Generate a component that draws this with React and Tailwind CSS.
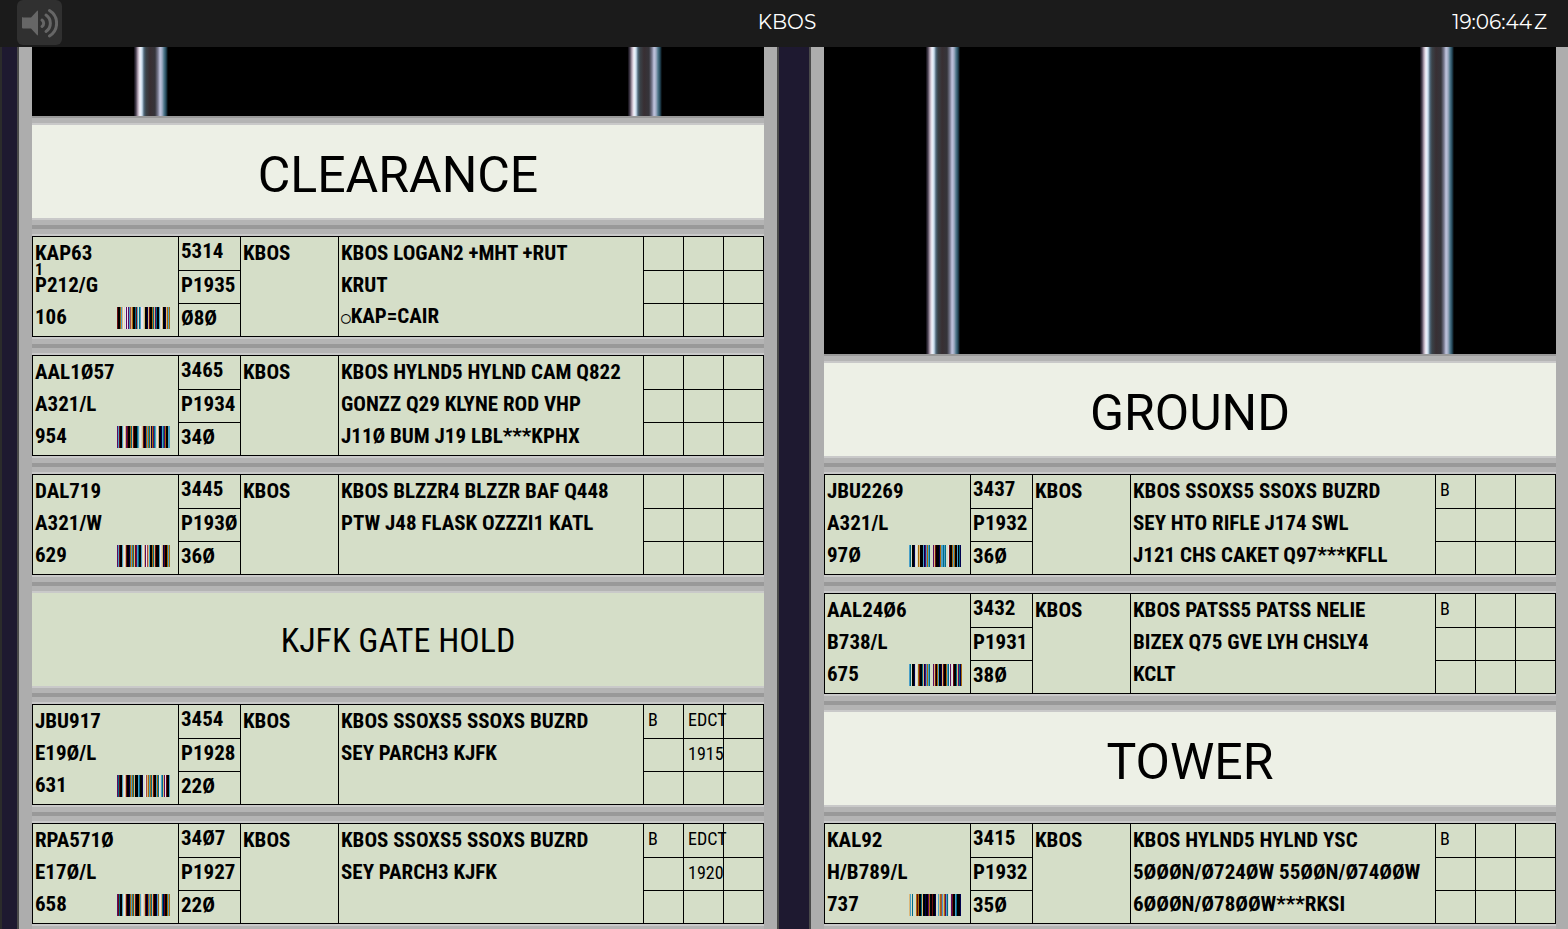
import React, { useState } from 'react';

const BAR_COLORS = {
  K: '#000000',
  n: '#00004f',
  p: '#5b0a63',
  r: '#6b0c10',
  m: '#a04c4c',
  o: '#a8690a',
  l: '#dcb878',
  t: '#006a86',
  b: '#4aa0c8',
  w: '#e8e4ec',
};

const CLEARANCE = [
  {
    id: 'KAP63', rev: '1', type: 'P212/G', cid: '106', code: '5314', time: 'P1935', alt: 'Ø8Ø', bars: 'rKKoblw.wpwpbmloKKtrb.tbww.lKKnlrKKotlptKKb.wlKKnlobo',
    route: ['KBOS LOGAN2 +MHT +RUT', 'KRUT', '○KAP=CAIR'], notes: {},
  },
  {
    id: 'AAL1Ø57', type: 'A321/L', cid: '954', code: '3465', time: 'P1934', alt: '34Ø', bars: 'pbrKKb.wlprKKotlrKKKtb.w.lrKnobotlnoptb.wlKKnbtpoKKbb',
    route: ['KBOS HYLND5 HYLND CAM Q822', 'GONZZ Q29 KLYNE ROD VHP', 'J11Ø BUM J19 LBL***KPHX'], notes: {},
  },
  {
    id: 'DAL719', type: 'A321/W', cid: '629', code: '3445', time: 'P193Ø', alt: '36Ø', bars: 'pbrKKb.wlrKKnobotlrpbtKKb.wlpwmlbKKotlrKKKbw.lnrKKobo',
    route: ['KBOS BLZZR4 BLZZR BAF Q448', 'PTW J48 FLASK OZZZI1 KATL'], notes: {},
  },
];

const GATE_HOLD = [
  {
    id: 'JBU917', type: 'E19Ø/L', cid: '631', code: '3454', time: 'P1928', alt: '22Ø', bars: 'ptrKKb.wlrKKnobotlKKKbtKKn..wmlobotlrKKbotw.btlpwrKKb',
    route: ['KBOS SSOXS5 SSOXS BUZRD', 'SEY PARCH3 KJFK'], notes: { 0: 'B', 1: 'EDCT', 4: '1915' },
  },
  {
    id: 'RPA571Ø', type: 'E17Ø/L', cid: '658', code: '34Ø7', time: 'P1927', alt: '22Ø', bars: 'prtKKb.wlrKKnobotlrKKKob.w.lrKnobotlrKKnbo.wltnrKKobo',
    route: ['KBOS SSOXS5 SSOXS BUZRD', 'SEY PARCH3 KJFK'], notes: { 0: 'B', 1: 'EDCT', 4: '1920' },
  },
];

const GROUND = [
  {
    id: 'JBU2269', type: 'A321/L', cid: '97Ø', code: '3437', time: 'P1932', alt: '36Ø', bars: 'bt.KKn.w.olKKKbnpbobt...plrKKKnobbtbt..wrKKoboKKbKtn.',
    route: ['KBOS SSOXS5 SSOXS BUZRD', 'SEY HTO RIFLE J174 SWL', 'J121 CHS CAKET Q97***KFLL'], notes: { 0: 'B' },
  },
  {
    id: 'AAL24Ø6', type: 'B738/L', cid: '675', code: '3432', time: 'P1931', alt: '38Ø', bars: 'bt.KKn.w.orKKtlnpbobt...plrKobKKnlrKKobtwp.wrKKtlptno',
    route: ['KBOS PATSS5 PATSS NELIE', 'BIZEX Q75 GVE LYH CHSLY4', 'KCLT'], notes: { 0: 'B' },
  },
];

const TOWER = [
  {
    id: 'KAL92', type: 'H/B789/L', cid: '737', code: '3415', time: 'P1932', alt: '35Ø', bars: 'lb.t...oroKKtlKKnKKpoKKrKKn..blomblopbt.w.prKKbtKKKn.',
    route: ['KBOS HYLND5 HYLND YSC', '5ØØØN/Ø724ØW 55ØØN/Ø74ØØW', '6ØØØN/Ø78ØØW***RKSI'], notes: { 0: 'B' },
  },
];

function Barcode({ pattern }) {
  return (
    <svg className="h-[22px] w-[53px] shrink-0" viewBox="0 0 53 22" shapeRendering="crispEdges" aria-hidden="true">
      {pattern.split('').map((c, i) =>
        BAR_COLORS[c] ? <rect key={i} x={i} y="0" width="1" height="22" fill={BAR_COLORS[c]} /> : null
      )}
    </svg>
  );
}

function Slot({ children }) {
  return (
    <div className="shrink-0 border-y-2 border-[#999999]">
      <div className="border-y-[5px] border-[#b4b4b4]">
        <div className="border-y-2 border-[#c9c9c9]">{children}</div>
      </div>
    </div>
  );
}

function Separator({ label }) {
  return (
    <Slot>
      <h2 className="flex h-[93px] items-center justify-center bg-[#edf0e6] pt-1.5 font-[Roboto,sans-serif] text-[50px] leading-none">
        {label}
      </h2>
    </Slot>
  );
}

function HandwrittenSeparator({ value }) {
  const [text, setText] = useState(value);
  return (
    <Slot>
      <input
        aria-label="Separator text"
        value={text}
        onChange={(e) => setText(e.target.value)}
        className="block h-[93px] w-full bg-[#d5dec8] text-center font-['Roboto_Condensed','Open_Sans',sans-serif] text-[34px] outline-none"
      />
    </Slot>
  );
}

function RouteLine({ text }) {
  const marked = text.startsWith('○');
  return (
    <div>
      {marked && <span className="text-base font-normal">○</span>}
      {marked ? text.slice(1) : text}
    </div>
  );
}

function Strip({ strip }) {
  const [notes, setNotes] = useState(strip.notes);
  return (
    <Slot>
      <article className="grid h-[101px] grid-cols-[145px_63px_98px_1fr_120px] border border-black bg-[#d5dec8] font-['Roboto_Condensed','DejaVu_Sans_Mono',sans-serif] text-[21px] leading-none font-bold">
        <div className="relative grid grid-rows-3 items-center pb-0.5 pl-0.5">
          <div>{strip.id}</div>
          {strip.rev && <div className="absolute top-[25px] left-0.5 text-base leading-none">{strip.rev}</div>}
          <div>{strip.type}</div>
          <div className="flex items-center justify-between pr-2">
            <span>{strip.cid}</span>
            <Barcode pattern={strip.bars} />
          </div>
        </div>
        <div className="grid grid-rows-3 border-x border-black">
          {[strip.code, strip.time, strip.alt].map((v, i) => (
            <div key={i} className={i === 0 ? 'flex items-center pb-1 pl-0.5' : 'flex items-center border-t border-black pb-1 pl-0.5'}>{v}</div>
          ))}
        </div>
        <div className="grid grid-rows-3 items-center border-r border-black pb-0.5 pl-0.5">
          <div>KBOS</div>
        </div>
        <div className="grid grid-rows-3 items-center pb-0.5 pl-0.5 whitespace-nowrap">
          {strip.route.map((line, i) => (
            <RouteLine key={i} text={line} />
          ))}
        </div>
        <div className="grid grid-cols-3 grid-rows-3">
          {Array.from({ length: 9 }, (_, i) => (
            <div key={i} className={i < 3 ? 'border-l border-black' : 'border-t border-l border-black'}>
              <input
                aria-label={`${strip.id} box ${i + 1}`}
                value={notes[i] || ''}
                onChange={(e) => setNotes({ ...notes, [i]: e.target.value })}
                className="block h-full w-12 bg-transparent pb-1 pl-1 font-['Roboto_Condensed','Open_Sans',sans-serif] text-lg font-normal outline-none"
              />
            </div>
          ))}
        </div>
      </article>
    </Slot>
  );
}

function Rail() {
  return (
    <div className="w-[34px] bg-[linear-gradient(90deg,#0c0a10_0px,#4c4454_2px,#b9a9b9_4px,#f4f4fc_6px,#c8dcec_8px,#50687a_10px,#3a4248_12px,#382f33_16px,#35343a_21px,#7a7c92_24px,#c0c4de_26px,#a0acc4_28px,#50788c_30px,#24485a_32px,#000000_34px)]" />
  );
}

function Bay({ children }) {
  return (
    <section className="-mb-1 flex min-w-0 flex-1 flex-col border-x-2 border-[#4a4a4a] bg-[#adadad] px-[13px]">
      <div className="flex min-h-0 grow justify-between bg-black px-[14%]">
        <Rail />
        <Rail />
      </div>
      {children}
    </section>
  );
}

function SpeakerIcon() {
  return (
    <svg className="h-[30px] w-9" viewBox="0 0 36 30" fill="none" aria-hidden="true">
      <path d="M1 9.5h8l6-6.5q1-1 1 .5v23q0 1.500-1 .5l-6-6.500H1q-1 0-1-1v-9.500q0-1 1-1z" fill="#666666" />
      <g stroke="#666666" strokeWidth="3" strokeLinecap="round">
        <path d="M20 12a4 4 0 0 1 0 6.500" />
        <path d="M24 7a10 10 0 0 1 0 16.500" />
        <path d="M27.500 2.500a15 15 0 0 1 0 25.500" />
      </g>
    </svg>
  );
}

export default function App() {
  return (
    <div className="flex h-screen flex-col overflow-hidden bg-[#1e1930] text-black">
      <header className="grid h-[47px] shrink-0 grid-cols-3 items-center bg-[#1b1b1b] pr-[21px] pl-[17px] font-[Montserrat,Inter,sans-serif] text-xl text-white">
        <button type="button" aria-label="Toggle sound" className="-mt-0.5 flex h-[45px] w-[45px] items-center justify-center rounded-md bg-[#303030]">
          <SpeakerIcon />
        </button>
        <h1 className="-mt-1 pl-2.5 text-center">KBOS</h1>
        <time className="-mt-1 text-right">19:06:44<span className="pl-0.5">Z</span></time>
      </header>
      <main className="-mr-[3px] flex min-h-0 flex-1 gap-[30px] overflow-hidden border-l-2 border-[#2b2b2b] pl-[15px]">
        <Bay>
          <Separator label="CLEARANCE" />
          {CLEARANCE.map((s) => <Strip key={s.id} strip={s} />)}
          <HandwrittenSeparator value="KJFK GATE HOLD" />
          {GATE_HOLD.map((s) => <Strip key={s.id} strip={s} />)}
        </Bay>
        <Bay>
          <Separator label="GROUND" />
          {GROUND.map((s) => <Strip key={s.id} strip={s} />)}
          <Separator label="TOWER" />
          {TOWER.map((s) => <Strip key={s.id} strip={s} />)}
        </Bay>
      </main>
    </div>
  );
}
